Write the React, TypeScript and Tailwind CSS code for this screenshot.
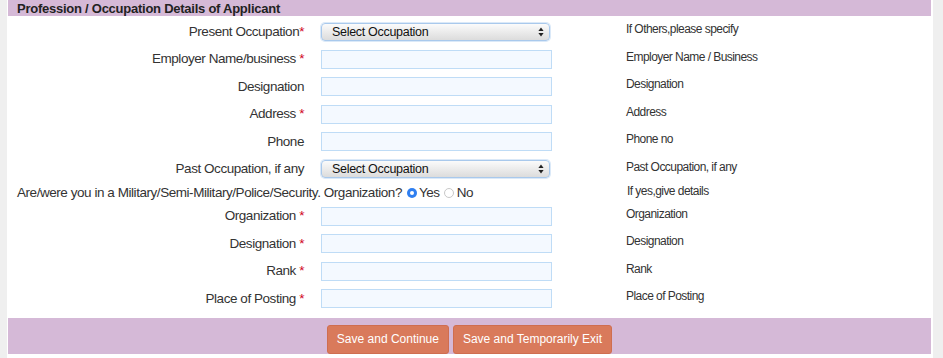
import React from "react";

type Row = { label: string; req?: "tight" | "space"; kind: "input" | "select"; hint: string };

const top: Row[] = [
  { label: "Present Occupation", req: "tight", kind: "select", hint: "If Others,please specify" },
  { label: "Employer Name/business", req: "space", kind: "input", hint: "Employer Name / Business" },
  { label: "Designation", kind: "input", hint: "Designation" },
  { label: "Address", req: "space", kind: "input", hint: "Address" },
  { label: "Phone", kind: "input", hint: "Phone no" },
  { label: "Past Occupation, if any", kind: "select", hint: "Past Occupation, if any" },
];

const bottom: Row[] = [
  { label: "Organization", req: "space", kind: "input", hint: "Organization" },
  { label: "Designation", req: "space", kind: "input", hint: "Designation" },
  { label: "Rank", req: "space", kind: "input", hint: "Rank" },
  { label: "Place of Posting", req: "space", kind: "input", hint: "Place of Posting" },
];

function SelectBox() {
  return (
    <div className="flex h-[18px] w-[229px] items-center justify-between rounded-[4px] border border-[#a9c9ec] bg-gradient-to-b from-[#fbfbfb] to-[#dcdcdc] pl-[10px] pr-[5px] shadow-[0_0_0_1px_#dbe9f8]">
      <span className="text-[12.5px] leading-none text-[#111] tracking-[-0.3px]">Select Occupation</span>
      <svg width="6" height="10" viewBox="0 0 6 10">
        <path d="M3 0.5 L5.6 4 H0.4 Z" fill="#222" />
        <path d="M3 9.5 L5.6 6 H0.4 Z" fill="#222" />
      </svg>
    </div>
  );
}

function InputBox() {
  return <div className="h-[19px] w-[231px] border border-[#bfdcf6] bg-[#f4f9ff]" />;
}

function FieldRow({ r }: { r: Row }) {
  return (
    <div className="flex h-[27.5px] items-center">
      <div className="w-[296px] text-right text-[13.5px] tracking-[-0.45px] text-[#333]">
        {r.label}
        {r.req === "space" ? " " : ""}
        {r.req ? <span className="text-[#d0021b]">*</span> : null}
      </div>
      <div className="ml-[17px] w-[231px] flex justify-start">
        {r.kind === "select" ? <SelectBox /> : <InputBox />}
      </div>
      <div className="ml-[74px] mb-[5px] text-[12px] tracking-[-0.55px] text-[#333]">{r.hint}</div>
    </div>
  );
}

export default function App() {
  return (
    <div className="h-[358px] w-[943px] overflow-hidden bg-[#efefef] font-['Liberation_Sans',Arial,sans-serif]">
      <div className="ml-[7px] flex h-full w-[926px] flex-col bg-white pl-[1px] pr-[2px]">
        <div className="h-[16px] bg-[#d5b9d7] pl-[9px] text-[13px] font-bold leading-[17px] tracking-[-0.25px] text-[#222]">
          Profession / Occupation Details of Applicant
        </div>
        <div className="pt-[2px]">
          {top.map((r, i) => (
            <FieldRow key={"t" + i} r={r} />
          ))}
          <div className="flex h-[19.5px] items-center">
            <div className="flex w-[618px] items-center pl-[9px] text-[13.5px] tracking-[-0.45px] text-[#333]">
              <span>Are/were you in a Military/Semi-Military/Police/Security. Organization?</span>
              <span className="ml-[5px] flex h-[10px] w-[10px] items-center justify-center rounded-full bg-[#2f7ff0]">
                <span className="h-[4px] w-[4px] rounded-full bg-white" />
              </span>
              <span className="ml-[2px]">Yes</span>
              <span className="ml-[4px] h-[10px] w-[10px] rounded-full border border-[#c8c8c8] bg-white" />
              <span className="ml-[3px]">No</span>
            </div>
            <div className="ml-[1px] mb-[4px] text-[12px] tracking-[-0.55px] text-[#333]">If yes,give details</div>
          </div>
          {bottom.map((r, i) => (
            <FieldRow key={"b" + i} r={r} />
          ))}
        </div>
        <div className="mt-[5px] flex h-[36px] justify-center gap-[4px] bg-[#d5b9d7] pt-[7px]">
          <button className="h-[29px] rounded-[3px] border border-[#cf6e50] bg-[#d97a5b] px-[9px] text-[12px] text-white">
            Save and Continue
          </button>
          <button className="h-[29px] rounded-[3px] border border-[#cf6e50] bg-[#d97a5b] px-[9px] text-[12px] text-white">
            Save and Temporarily Exit
          </button>
        </div>
      </div>
    </div>
  );
}
